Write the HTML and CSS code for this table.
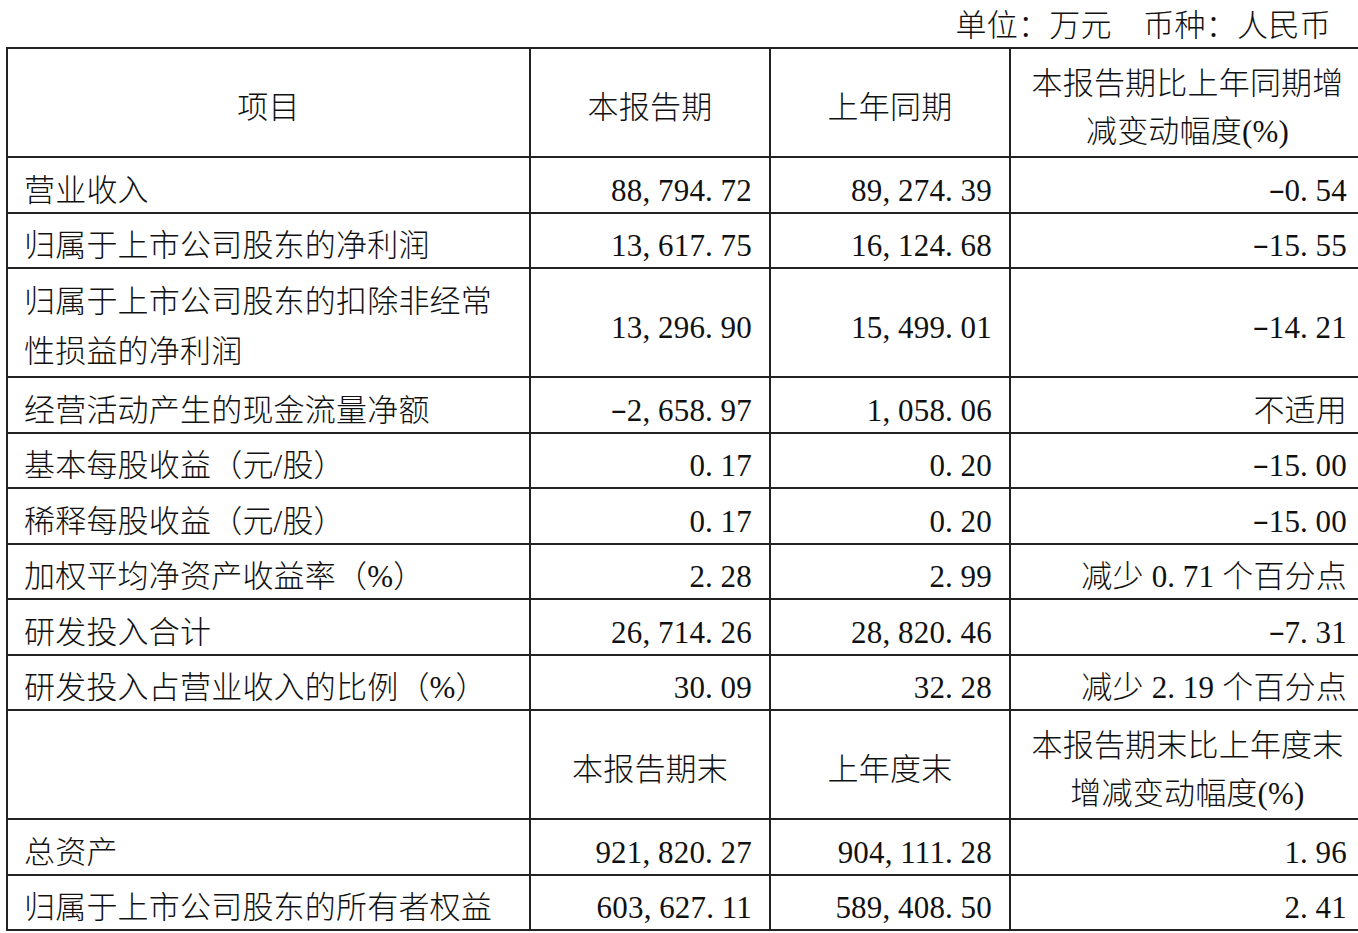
FILE: index.html
```html
<!DOCTYPE html>
<html lang="zh-CN">
<head>
<meta charset="utf-8">
<title>主要会计数据和财务指标</title>
<link rel="stylesheet" href="styles.css">
</head>
<body>
<div class="page">
  <div class="unit">单位：万元　币种：人民币</div>
  <table class="report">
    <colgroup>
      <col class="c-item">
      <col class="c-cur">
      <col class="c-prev">
      <col class="c-chg">
    </colgroup>
    <tbody>
      <tr class="head">
        <td class="center">项目</td>
        <td class="center">本报告期</td>
        <td class="center">上年同期</td>
        <td class="center multi-head">本报告期比上年同期增<br>减变动幅度(%)</td>
      </tr>
      <tr>
        <td>营业收入</td>
        <td class="num">88<span class="sep">,</span>794<span class="sep">.</span>72</td>
        <td class="num">89<span class="sep">,</span>274<span class="sep">.</span>39</td>
        <td class="num"><span class="minus">-</span>0<span class="sep">.</span>54</td>
      </tr>
      <tr>
        <td>归属于上市公司股东的净利润</td>
        <td class="num">13<span class="sep">,</span>617<span class="sep">.</span>75</td>
        <td class="num">16<span class="sep">,</span>124<span class="sep">.</span>68</td>
        <td class="num"><span class="minus">-</span>15<span class="sep">.</span>55</td>
      </tr>
      <tr>
        <td class="multi">归属于上市公司股东的扣除非经常<br>性损益的净利润</td>
        <td class="num">13<span class="sep">,</span>296<span class="sep">.</span>90</td>
        <td class="num">15<span class="sep">,</span>499<span class="sep">.</span>01</td>
        <td class="num"><span class="minus">-</span>14<span class="sep">.</span>21</td>
      </tr>
      <tr>
        <td>经营活动产生的现金流量净额</td>
        <td class="num"><span class="minus">-</span>2<span class="sep">,</span>658<span class="sep">.</span>97</td>
        <td class="num">1<span class="sep">,</span>058<span class="sep">.</span>06</td>
        <td class="num">不适用</td>
      </tr>
      <tr>
        <td>基本每股收益（元/股）</td>
        <td class="num">0<span class="sep">.</span>17</td>
        <td class="num">0<span class="sep">.</span>20</td>
        <td class="num"><span class="minus">-</span>15<span class="sep">.</span>00</td>
      </tr>
      <tr>
        <td>稀释每股收益（元/股）</td>
        <td class="num">0<span class="sep">.</span>17</td>
        <td class="num">0<span class="sep">.</span>20</td>
        <td class="num"><span class="minus">-</span>15<span class="sep">.</span>00</td>
      </tr>
      <tr>
        <td>加权平均净资产收益率（%）</td>
        <td class="num">2<span class="sep">.</span>28</td>
        <td class="num">2<span class="sep">.</span>99</td>
        <td class="num">减少 0<span class="sep">.</span>71 个百分点</td>
      </tr>
      <tr>
        <td>研发投入合计</td>
        <td class="num">26<span class="sep">,</span>714<span class="sep">.</span>26</td>
        <td class="num">28<span class="sep">,</span>820<span class="sep">.</span>46</td>
        <td class="num"><span class="minus">-</span>7<span class="sep">.</span>31</td>
      </tr>
      <tr>
        <td>研发投入占营业收入的比例（%）</td>
        <td class="num">30<span class="sep">.</span>09</td>
        <td class="num">32<span class="sep">.</span>28</td>
        <td class="num">减少 2<span class="sep">.</span>19 个百分点</td>
      </tr>
      <tr class="head">
        <td></td>
        <td class="center">本报告期末</td>
        <td class="center">上年度末</td>
        <td class="center multi-head">本报告期末比上年度末<br>增减变动幅度(%)</td>
      </tr>
      <tr>
        <td>总资产</td>
        <td class="num">921<span class="sep">,</span>820<span class="sep">.</span>27</td>
        <td class="num">904<span class="sep">,</span>111<span class="sep">.</span>28</td>
        <td class="num">1<span class="sep">.</span>96</td>
      </tr>
      <tr>
        <td>归属于上市公司股东的所有者权益</td>
        <td class="num">603<span class="sep">,</span>627<span class="sep">.</span>11</td>
        <td class="num">589<span class="sep">,</span>408<span class="sep">.</span>50</td>
        <td class="num">2<span class="sep">.</span>41</td>
      </tr>
    </tbody>
  </table>
</div>
</body>
</html>
```

FILE: styles.css
```css
html, body {
  margin: 0;
  padding: 0;
  background: #ffffff;
  overflow: hidden;
}

body {
  font-family: "Liberation Serif", "Noto Sans CJK SC", serif;
  font-size: 31px;
  font-weight: 300;
  color: #111111;
}

.page {
  padding-left: 6px;
  width: 1400px;
}

.unit {
  box-sizing: border-box;
  width: 1352px;
  height: 47px;
  padding: 5px 27px 0 0;
  line-height: 42px;
  text-align: right;
  white-space: nowrap;
  letter-spacing: 0.3px;
}

.report {
  border-collapse: separate;
  border-spacing: 0;
  table-layout: fixed;
  width: 1360px;
  border-left: 2px solid #222222;
  border-top: 2px solid #222222;
}

.c-item { width: 523px; }
.c-cur { width: 240px; }
.c-prev { width: 240px; }
.c-chg { width: 355px; }

.report td {
  box-sizing: border-box;
  border-right: 2px solid #222222;
  border-bottom: 2px solid #222222;
  padding: 11.5px 17px 0 16px;
  line-height: 42px;
  vertical-align: middle;
  white-space: nowrap;
  letter-spacing: 0.2px;
}

.report td.multi {
  padding-top: 8px;
  line-height: 49.5px;
}

.report td.multi-head {
  padding-top: 11px;
  line-height: 48px;
}

.report td.num {
  text-align: right;
}

.report td.center {
  text-align: center;
  padding-left: 8px;
  padding-right: 8px;
}

.sep {
  letter-spacing: 0.25em;
}

.minus {
  display: inline-block;
  width: 0.5em;
  text-align: center;
  letter-spacing: 0;
  transform: translateY(-0.06em) scaleX(1.6);
}
```
